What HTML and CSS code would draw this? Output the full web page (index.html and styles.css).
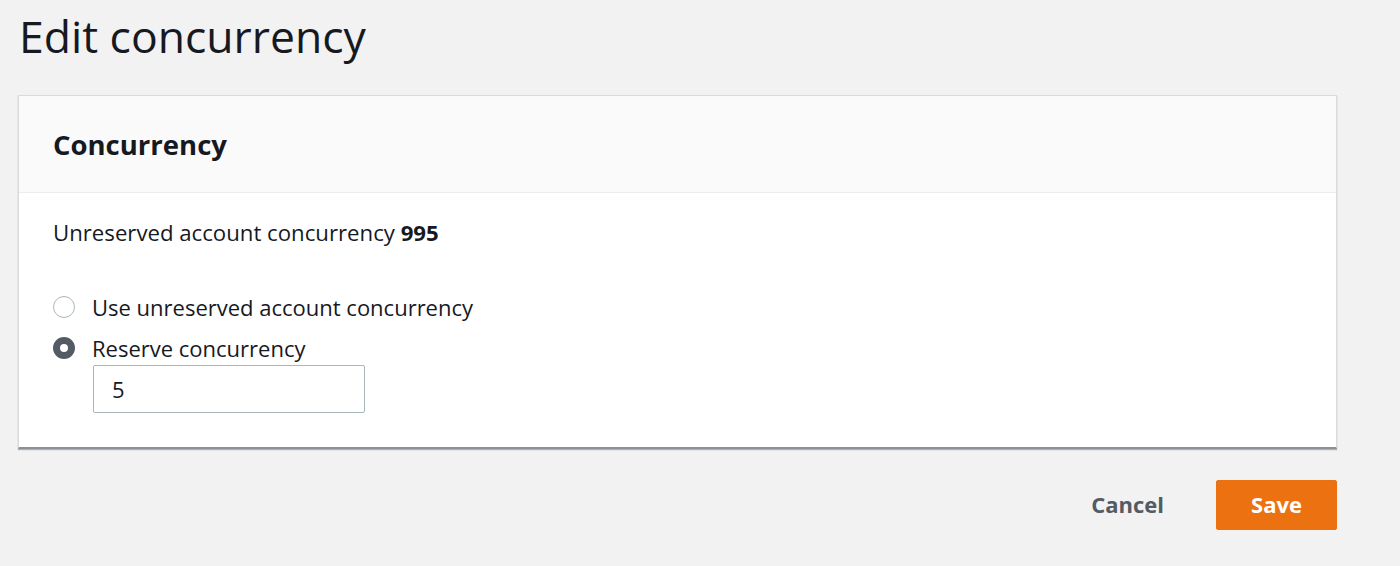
FILE: index.html
```html
<!DOCTYPE html>
<html>
<head>
<meta charset="utf-8">
<link rel="stylesheet" href="styles.css">
</head>
<body>
<div class="page">
  <h1 class="title">Edit concurrency</h1>
  <section class="card">
    <div class="card-header"><h2>Concurrency</h2></div>
    <div class="card-body">
      <p class="info">Unreserved account concurrency <b>995</b></p>
      <div class="radios">
        <label class="radio"><span class="dot"></span><span>Use unreserved account concurrency</span></label>
        <label class="radio"><span class="dot checked"></span><span>Reserve concurrency</span></label>
        <div class="input-wrap"><input class="input" type="text" value="5"></div>
      </div>
    </div>
  </section>
  <div class="actions">
    <button class="btn-link">Cancel</button>
    <button class="btn-primary">Save</button>
  </div>
</div>
</body>
</html>
```
FILE: styles.css
```css
* { box-sizing: border-box; }
html, body { margin: 0; padding: 0; }
body {
  background: #f2f2f2;
  font-family: "Open Sans", "Noto Sans", sans-serif;
  color: #16191f;
}
.page {
  padding: 0 63px 0 18px;
}
.title {
  margin: 0;
  padding: 6px 0 0 1px;
  font-weight: 400;
  font-size: 44.5px;
  line-height: 60px;
  height: 95px;
}
.card {
  background: #fff;
  border: 1px solid #dadada;
  border-bottom: 2px solid #8d9096;
  box-shadow: 0 1px 1px rgba(0,28,36,0.3);
}
.card-header {
  background: #fafafa;
  border-bottom: 1px solid #eaeded;
  height: 97px;
  display: flex;
  align-items: center;
  padding: 0 34px;
}
.card-header h2 {
  margin: 0;
  font-size: 27.5px;
  font-weight: 700;
}
.card-body {
  padding: 26px 34px 34px;
}
.info {
  margin: 0;
  font-size: 22.2px;
  line-height: 28px;
}
.info b { font-weight: 700; }
.radios {
  margin-top: 43px;
  display: flex;
  flex-direction: column;
  gap: 7px;
}
.radio {
  display: flex;
  align-items: center;
  gap: 17px;
  font-size: 22px;
  height: 34px;
}
.dot {
  width: 22px;
  height: 22px;
  border-radius: 50%;
  border: 1.5px solid #aab7b8;
  background: #fff;
  flex: none;
}
.dot.checked {
  border: 7px solid #545b64;
  background: #fff;
}
.input-wrap {
  padding-left: 40px;
  margin-top: -7px;
}
.input {
  width: 272px;
  height: 48px;
  border: 1px solid #aab7b8;
  border-radius: 2px;
  padding: 0 18px;
  font-family: inherit;
  font-size: 22px;
  color: #16191f;
}
.actions {
  display: flex;
  justify-content: flex-end;
  align-items: center;
  margin-top: 31px;
  gap: 52px;
}
.btn-link {
  border: none;
  background: none;
  font-family: inherit;
  font-size: 22px;
  font-weight: 700;
  color: #545b64;
  padding: 0 0 3px;
}
.btn-primary {
  width: 121px;
  height: 50px;
  border: 1px solid #ec7211;
  border-radius: 2px;
  background: #ec7211;
  color: #fff;
  font-family: inherit;
  font-size: 22px;
  font-weight: 700;
  padding: 0 0 2px;
}
```
